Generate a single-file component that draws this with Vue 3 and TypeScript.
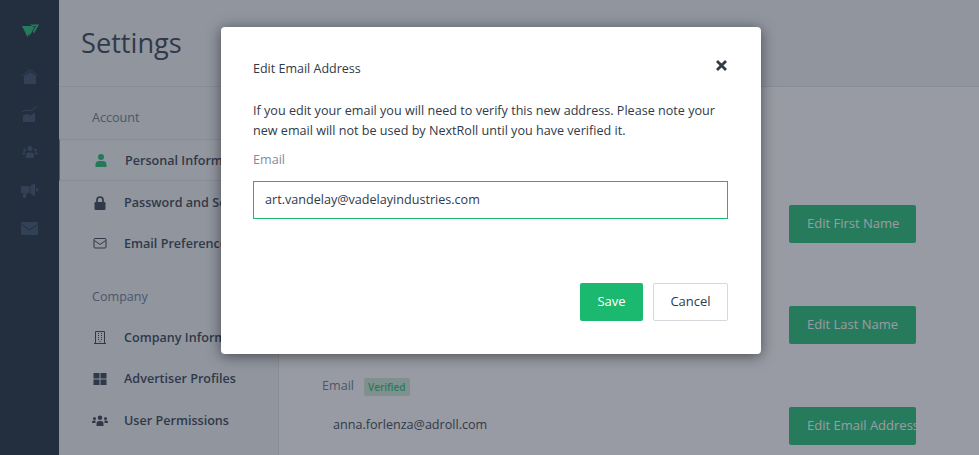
<template>
  <div class="app">
    <aside class="rail">
      <div class="rail-logo">
        <svg width="17" height="13" viewBox="0 0 17 13">
          <path d="M0 2h11.200L5.500 13z" fill="#1bbf71" />
          <path d="M7.500 0.500H17L12 9.500l-1-2L14 2h-3.500z" fill="#1bbf71" />
          <path d="M12.800 2.800 7.800 11.500 6.800 9.500l4-6.700z" fill="#1bbf71" />
        </svg>
      </div>
      <div class="rail-slot">
        <svg width="16" height="15" viewBox="0 0 16 15">
          <path d="M2 7 8 3l6 4v7a1 1 0 0 1-1 1H3a1 1 0 0 1-1-1z" />
          <path d="M.5 6.500 8 .8l7.500 5.700" fill="none" stroke="#324a63" stroke-width="1" />
        </svg>
      </div>
      <div class="rail-slot">
        <svg width="15" height="16" viewBox="0 0 15 16">
          <path d="M1 9.500 5 8l3.500 1.500L13 6.500V16H1z" />
          <path d="M0 5.500 5 4l4 .8L14.500.8" fill="none" stroke="#324a63" stroke-width="1" />
        </svg>
      </div>
      <div class="rail-slot">
        <svg width="16" height="12" viewBox="0 0 16 12">
          <circle cx="8" cy="2.500" r="2.500" />
          <path d="M4 12V9A2.500 2.500 0 0 1 6.500 6.500h3A2.500 2.500 0 0 1 12 9v3z" />
          <circle cx="2.500" cy="4" r="1.500" /><circle cx="13.500" cy="4" r="1.500" />
          <path d="M0 8.500A1.800 1.800 0 0 1 2 6.500h1.500L3 8.500z M16 8.500a1.800 1.800 0 0 0-2-2h-1.500l.5 2z" />
        </svg>
      </div>
      <div class="rail-slot">
        <svg width="17" height="15" viewBox="0 0 17 15">
          <path d="M0 3h8.500v7H5.500L5 15H2.200L2 10H0z" />
          <path d="M9.500 2.800 14 0v13.500L9.500 10.500z" />
          <path d="M15 4.800a2 2 0 0 1 0 4z" />
        </svg>
      </div>
      <div class="rail-slot">
        <svg width="17" height="13" viewBox="0 0 17 13">
          <rect width="17" height="13" rx="1.500" />
          <path d="M.5 2.500 8.500 8l8-5.500" fill="none" stroke="#152737" stroke-width="1" />
        </svg>
      </div>
    </aside>

    <main class="main">
      <header class="page-head">
        <h1>Settings</h1>
      </header>
      <div class="page-body">
        <nav class="nav">
          <div class="nav-group-title">Account</div>
          <a class="nav-item active">
            <svg width="13" height="13" viewBox="0 0 13 13">
              <circle cx="6.500" cy="3" r="3" fill="currentColor" />
              <path d="M1 13v-2.500A3.500 3.500 0 0 1 4.500 7h4a3.500 3.500 0 0 1 3.500 3.500V13z" fill="currentColor" />
            </svg>
            <span>Personal Information</span>
          </a>
          <a class="nav-item">
            <svg width="13" height="14" viewBox="0 0 13 14">
              <path d="M3.500 6V4a3 3 0 0 1 6 0v2" fill="none" stroke="currentColor" stroke-width="1.700" />
              <rect x="1" y="6" width="11" height="8" rx="1.200" fill="currentColor" />
            </svg>
            <span>Password and Security</span>
          </a>
          <a class="nav-item">
            <svg width="13" height="11" viewBox="0 0 13 11" fill="none" stroke="currentColor">
              <rect x=".5" y=".5" width="12" height="9.500" rx="1" />
              <path d="M.8 2.500 6.500 6.500l5.700-4" />
            </svg>
            <span>Email Preferences</span>
          </a>

          <div class="nav-group-title second">Company</div>
          <a class="nav-item">
            <svg width="12" height="13" viewBox="0 0 12 13" fill="none" stroke="currentColor">
              <path d="M1.500.5h9v12h-9z M0 12.500h12" />
              <path d="M4 2.500h1M7 2.500h1M4 4.500h1M7 4.500h1M4 6.500h1M7 6.500h1M4 8.500h1M7 8.500h1M5.500 10.500h1" />
            </svg>
            <span>Company Information</span>
          </a>
          <a class="nav-item">
            <svg width="13" height="12" viewBox="0 0 13 12" fill="currentColor">
              <rect width="6" height="5.500" /><rect x="7" width="6" height="5.500" />
              <rect y="6.500" width="6" height="5.500" /><rect x="7" y="6.500" width="6" height="5.500" />
            </svg>
            <span>Advertiser Profiles</span>
          </a>
          <a class="nav-item">
            <svg width="16" height="11" viewBox="0 0 16 11" fill="currentColor">
              <circle cx="8" cy="2.800" r="2.300" />
              <path d="M4.500 11V8.500A2.500 2.500 0 0 1 7 6h2a2.500 2.500 0 0 1 2.500 2.500V11z" />
              <circle cx="2.500" cy="3.500" r="1.500" /><circle cx="13.500" cy="3.500" r="1.500" />
              <path d="M0 8V7a1.500 1.500 0 0 1 1.500-1.500h2L3.500 8z M16 8V7a1.500 1.500 0 0 0-1.500-1.500h-2v2.500z" />
            </svg>
            <span>User Permissions</span>
          </a>
        </nav>

        <section class="fields">
          <div v-for="f in fields" :key="f.label" class="field">
            <div class="field-text">
              <div class="field-label">
                <span>{{ f.label }}</span>
                <span v-if="f.verified" class="badge">Verified</span>
              </div>
              <div class="field-value">{{ f.value }}</div>
            </div>
            <button class="edit-btn" type="button">{{ f.action }}</button>
          </div>
        </section>
      </div>
    </main>

    <div class="overlay">
      <div class="modal">
        <div class="modal-head">
          <span>Edit Email Address</span>
          <svg class="close" width="13" height="13" viewBox="0 0 13 13">
            <path d="M2 2l9 9M11 2l-9 9" stroke="#2f3a4a" stroke-width="2.800" fill="none" />
          </svg>
        </div>
        <p class="modal-text">
          If you edit your email you will need to verify this new address. Please note your
          new email will not be used by NextRoll until you have verified it.
        </p>
        <label class="modal-label" for="email">Email</label>
        <input id="email" v-model="email" class="modal-input" type="text" />
        <div class="modal-foot">
          <button class="save" type="button">Save</button>
          <button class="cancel" type="button">Cancel</button>
        </div>
      </div>
    </div>
  </div>
</template>

<script setup lang="ts">
import { ref } from 'vue'

interface Field {
  label: string
  value: string
  action: string
  verified?: boolean
}

const email = ref('art.vandelay@vadelayindustries.com')

const fields: Field[] = [
  { label: 'First Name', value: 'Anna', action: 'Edit First Name' },
  { label: 'Last Name', value: 'Forlenza', action: 'Edit Last Name' },
  { label: 'Email', value: 'anna.forlenza@adroll.com', action: 'Edit Email Address', verified: true }
]
</script>

<style>
html,
body {
  margin: 0;
  height: 100%;
  overflow: hidden;
}
</style>

<style scoped>
.app {
  position: relative;
  display: flex;
  width: 979px;
  height: 455px;
  overflow: hidden;
  background: #fff;
  font-family: 'Open Sans', 'Liberation Sans', sans-serif;
  color: #2f3a4a;
}

.rail {
  flex: none;
  width: 59px;
  box-sizing: border-box;
  background: #152737;
  display: flex;
  flex-direction: column;
}
.rail-logo {
  height: 57px;
  box-sizing: border-box;
  padding: 24px 0 0 22px;
}
.rail-logo svg {
  display: block;
}
.rail-slot {
  height: 38px;
  display: flex;
  align-items: center;
  justify-content: center;
}
.rail-slot svg {
  fill: #324a63;
}

.main {
  flex: 1;
  min-width: 0;
  display: flex;
  flex-direction: column;
}
.page-head {
  flex: none;
  height: 87px;
  box-sizing: border-box;
  padding: 22px 0 0 22px;
  background: #eff3f5;
  border-bottom: 1px solid #dde1e6;
}
.page-head h1 {
  margin: 0;
  font-size: 27.200px;
  line-height: 42px;
  font-weight: 400;
  color: #2f3a4a;
}
.page-body {
  flex: 1;
  min-height: 0;
  display: flex;
}

.nav {
  flex: none;
  width: 220px;
  box-sizing: border-box;
  background: #eff3f5;
  border-right: 1px solid #dde1e6;
  padding-top: 20px;
}
.nav-group-title {
  padding-left: 33px;
  font-size: 12.600px;
  line-height: 22px;
  color: #66758c;
  height: 32px;
}
.nav-group-title.second {
  margin-top: 23px;
  height: 30px;
}
.nav-item {
  display: flex;
  align-items: center;
  box-sizing: border-box;
  height: 41px;
  padding: 2px 0 0 33px;
  font-size: 12.600px;
  font-weight: 600;
  color: #2f3a4a;
  white-space: nowrap;
}
.nav-item:last-child {
  margin-top: 1px;
}
.nav-item svg {
  flex: none;
  width: 16px;
  margin-right: 16px;
}
.nav-item.active {
  height: 42px;
  padding-top: 0;
  background: #f3f5f7;
  border-top: 1px solid #dde1e6;
  border-bottom: 1px solid #dde1e6;
  border-left: 1px solid #1bb96f;
}
.nav-item.active svg {
  color: #1bb96f;
}

.fields {
  flex: 1;
  padding: 89px 63px 0 43px;
}
.field {
  display: flex;
  justify-content: space-between;
  height: 101px;
}
.field-label {
  font-size: 12.600px;
  line-height: 15px;
  color: #66758c;
  display: flex;
  align-items: flex-start;
  gap: 10px;
}
.field-value {
  margin: 20px 0 0 11px;
  font-size: 12.600px;
  line-height: 18px;
}
.badge {
  height: 18px;
  background: #cfe9d5;
  color: #1bbf71;
  font-size: 10px;
  font-weight: 600;
  line-height: 19px;
  padding: 0 4px;
  border-radius: 2px;
}
.edit-btn {
  width: 127px;
  height: 38px;
  margin-top: 29px;
  padding: 0 0 2px 18px;
  border: none;
  border-radius: 2px;
  background: #1bbf71;
  color: #fff;
  font: 500 13px 'Open Sans', sans-serif;
  text-align: left;
  white-space: nowrap;
  overflow: hidden;
}

.overlay {
  position: absolute;
  inset: 0;
  background: rgba(49, 55, 71, 0.5);
}
.modal {
  position: absolute;
  left: 221px;
  top: 27px;
  width: 540px;
  height: 327px;
  box-sizing: border-box;
  padding: 33px 33px 33px 32px;
  background: #fff;
  border-radius: 4px;
  box-shadow: 0 2px 14px rgba(0, 0, 0, 0.5);
  display: flex;
  flex-direction: column;
}
.modal-head {
  display: flex;
  justify-content: space-between;
  font-size: 12.500px;
  line-height: 18px;
  color: #2f3a4a;
}
.close {
  margin: -1px 0 0 0;
}
.modal-text {
  margin: 23px 0 0;
  font-size: 12.600px;
  line-height: 20px;
  color: #2f3a4a;
}
.modal-label {
  margin-top: 9px;
  font-size: 12.600px;
  line-height: 20px;
  color: #7f8ba0;
}
.modal-input {
  height: 38px;
  box-sizing: border-box;
  margin-top: 11px;
  padding: 0 11px 2px;
  border: 1px solid #1bb96f;
  outline: none;
  font: 12.600px 'Open Sans', sans-serif;
  color: #2f3a4a;
}
.modal-foot {
  margin-top: auto;
  display: flex;
  justify-content: flex-end;
  gap: 10px;
}
.modal-foot button {
  height: 38px;
  padding: 0 0 2px;
  border-radius: 2px;
  font: 500 13px 'Open Sans', sans-serif;
}
.save {
  width: 63px;
  border: none;
  background: #1bb96f;
  color: #fff;
}
.cancel {
  width: 75px;
  border: 1px solid #d5d8dc;
  background: #fff;
  color: #2f3a4a;
}
</style>
